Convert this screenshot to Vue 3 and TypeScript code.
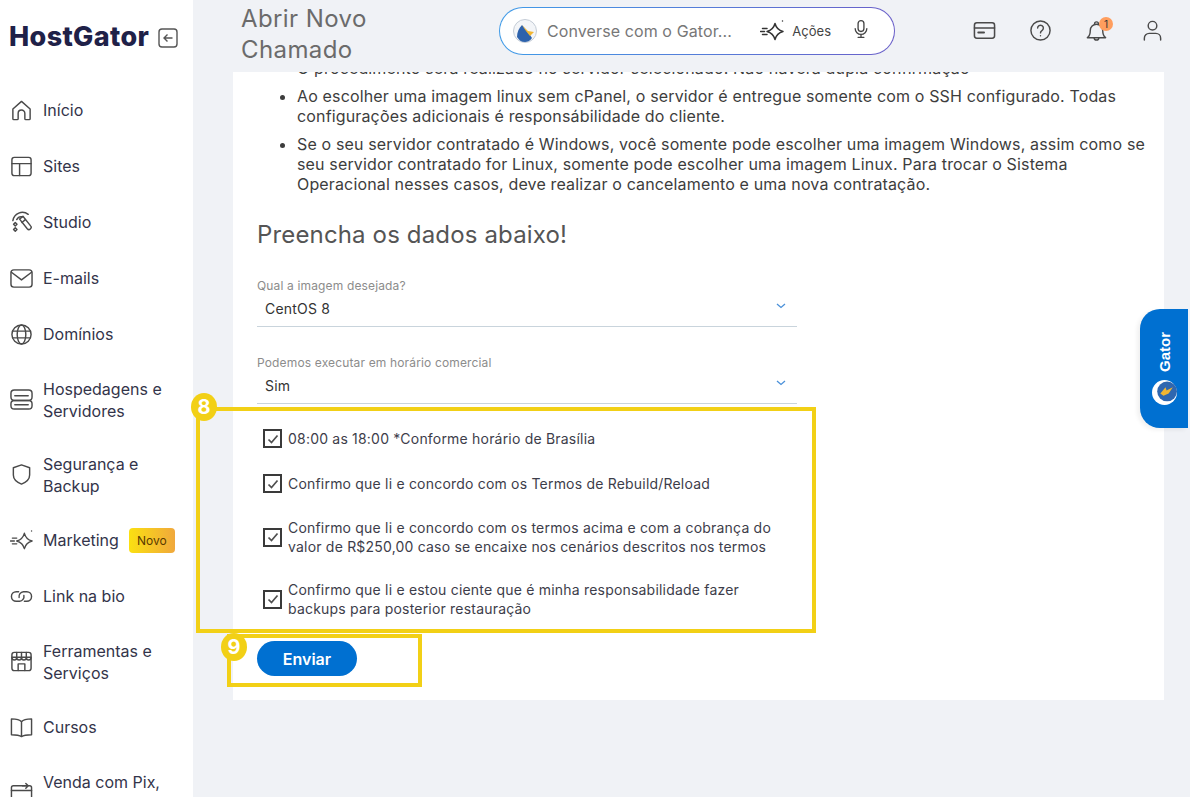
<script setup lang="ts">
interface NavItem { label: string; icon: string; badge?: boolean }
const nav: NavItem[] = [
  { label: 'Início', icon: 'home' },
  { label: 'Sites', icon: 'sites' },
  { label: 'Studio', icon: 'studio' },
  { label: 'E-mails', icon: 'mail' },
  { label: 'Domínios', icon: 'globe' },
  { label: 'Hospedagens e Servidores', icon: 'server' },
  { label: 'Segurança e Backup', icon: 'shield' },
  { label: 'Marketing', icon: 'spark', badge: true },
  { label: 'Link na bio', icon: 'link' },
  { label: 'Ferramentas e Serviços', icon: 'store' },
  { label: 'Cursos', icon: 'book' },
  { label: 'Venda com Pix, Boleto e Cartão', icon: 'sale' },
]
const checks: string[] = [
  '08:00 as 18:00 *Conforme horário de Brasília',
  'Confirmo que li e concordo com os Termos de Rebuild/Reload',
  'Confirmo que li e concordo com os termos acima e com a cobrança do valor de R$250,00 caso se encaixe nos cenários descritos nos termos',
  'Confirmo que li e estou ciente que é minha responsabilidade fazer backups para posterior restauração',
]
</script>

<template>
  <div class="page">
    <aside class="side">
      <div class="brand">
        <span class="logo">HostGator</span>
        <svg class="collapse" viewBox="0 0 20 20" fill="none" stroke="#555" stroke-width="1.4">
          <rect x="1" y="1" width="18" height="18" rx="3" />
          <path d="M14.5 10H6M9.5 6.5 6 10l3.5 3.5" />
        </svg>
      </div>
      <nav class="nav">
        <div v-for="item in nav" :key="item.label" class="nav-row">
          <svg class="nav-ico" viewBox="0 0 24 24" fill="none" stroke="#4a4a4a" stroke-width="1.5" stroke-linecap="round" stroke-linejoin="round">
            <template v-if="item.icon === 'home'">
              <path d="M3 20.500V10.500L12 2.500l9 8v10a1 1 0 0 1-1 1h-3.500a1 1 0 0 1-1-1V15a3.500 3.500 0 0 0-7 0v5.500a1 1 0 0 1-1 1H4a1 1 0 0 1-1-1Z" />
            </template>
            <template v-else-if="item.icon === 'sites'">
              <rect x="2" y="2.500" width="20" height="19" rx="2.500" /><path d="M2 9h20M10 9v12.500" />
            </template>
            <template v-else-if="item.icon === 'studio'">
              <path d="M3 10A10 10 0 0 1 19 3.500" /><path d="M7 9a5.500 5.500 0 0 1 6-3" /><path d="m10 8.500 3.500-3 8 10a2.300 2.300 0 0 1-3.500 3Z" /><path d="m12.500 12 3.500-3" /><path d="m5.500 12 1.800 1.800-1.800 1.800-1.800-1.800ZM5.500 17.500l1.800 1.800-1.800 1.800-1.800-1.800Z" />
            </template>
            <template v-else-if="item.icon === 'mail'">
              <rect x="1" y="3" width="22" height="18" rx="3" /><path d="m1.500 5.500 10.500 8 10.500-8" />
            </template>
            <template v-else-if="item.icon === 'globe'">
              <circle cx="12" cy="12" r="10" /><ellipse cx="12" cy="12" rx="4.500" ry="10" /><path d="M2.800 8.500h18.400M2.800 15.500h18.400" />
            </template>
            <template v-else-if="item.icon === 'server'">
              <rect x="1" y="2" width="22" height="11" rx="3.500" /><rect x="1" y="13" width="22" height="9" rx="3.500" /><path d="M5 8h14M5 17.500h14" />
            </template>
            <template v-else-if="item.icon === 'shield'">
              <path d="M12 2 20.500 5v7.500c0 4.500-3.500 7.500-8.500 9.500-5-2-8.500-5-8.500-9.500V5Z" />
            </template>
            <template v-else-if="item.icon === 'spark'">
              <path d="M15 4.500c1.200 4.500 3.500 6.800 8 8-4.500 1.200-6.800 3.500-8 8-1.200-4.500-3.500-6.800-8-8 4.500-1.200 6.800-3.500 8-8Z" /><path d="M22.500 2v.01M2.500 9.500h4.500M.5 12.500h4M2.500 15.500h4.500" />
            </template>
            <template v-else-if="item.icon === 'link'">
              <path d="M9 7H6.500a5 5 0 0 0 0 10H10a5 5 0 0 0 4.500-6" /><path d="M15 17h2.500a5 5 0 0 0 0-10H14a5 5 0 0 0-4.500 6" />
            </template>
            <template v-else-if="item.icon === 'store'">
              <rect x="2" y="2.500" width="20" height="19" rx="2.500" /><path d="M2 7.500h20M2 7.500c0 4 5 4 5 0 0 4 5 4 5 0 0 4 5 4 5 0 0 4 5 4 5 0M8.500 21.500v-7h7v7M7 2.500v5M12 2.500v5M17 2.500v5" />
            </template>
            <template v-else-if="item.icon === 'book'">
              <path d="M12 6C10 3.500 7 3 1.500 3v16.500c5.500 0 8.500.5 10.500 2 2-1.500 5-2 10.500-2V3C17 3 14 3.500 12 6ZM12 6v15.500" />
            </template>
            <template v-else>
              <rect x="1.500" y="5" width="21" height="16" rx="2" /><path d="M1.500 10h21M13 5h6M16.500 2.500 19 5l-2.500 2.500" />
            </template>
          </svg>
          <span class="nav-label" :class="{ narrow: item.label.length > 12 }">{{ item.label }}</span>
          <span v-if="item.badge" class="novo">Novo</span>
        </div>
      </nav>
    </aside>

    <div class="main">
      <header class="top">
        <h1 class="title">Abrir Novo Chamado</h1>
        <div class="chat">
          <svg class="gator" viewBox="0 0 24 24">
            <circle cx="12" cy="12" r="11.500" fill="#f3f5f8" stroke="#c4ccd6" />
            <path d="M4 18c0-5 2-9 5-12l4 5 4 5 2 3c-2 3-5 4-7 4-4 0-6-2-8-5Z" fill="#2d62ac" />
            <path d="M9 6l6 6 6 1-4 4-4-5Z" fill="#f2b632" />
          </svg>
          <span class="chat-ph">Converse com o Gator...</span>
          <svg class="chat-spark" viewBox="0 0 24 24" fill="none" stroke="#333" stroke-width="1.500" stroke-linecap="round" stroke-linejoin="round">
            <path d="M15 4.500c1.200 4.500 3.500 6.800 8 8-4.500 1.200-6.800 3.500-8 8-1.200-4.500-3.500-6.800-8-8 4.500-1.200 6.800-3.500 8-8Z" /><path d="M22.500 2v.01M2.500 9.500h4.500M.5 12.500h4M2.500 15.500h4.500" />
          </svg>
          <span class="chat-act">Ações</span>
          <svg class="chat-mic" viewBox="0 0 24 24" fill="none" stroke="#444" stroke-width="1.600" stroke-linecap="round">
            <rect x="8.500" y="2" width="7" height="13" rx="3.500" /><path d="M5 11.500a7 7 0 0 0 14 0M12 18.500V22M8.500 22h7" />
          </svg>
        </div>
        <div class="tools">
          <svg class="tool" viewBox="0 0 24 24" fill="none" stroke="#4a4a4a" stroke-width="1.600" stroke-linecap="round">
            <rect x="1.500" y="4" width="21" height="16" rx="2.500" /><path d="M1.500 9.500h21" /><path d="M5.500 14h6" stroke-width="2" />
          </svg>
          <svg class="tool" viewBox="0 0 24 24" fill="none" stroke="#4a4a4a" stroke-width="1.500" stroke-linecap="round">
            <circle cx="12" cy="12" r="10" /><path d="M9 9.500a3 3 0 1 1 4.500 2.600c-1 .6-1.500 1.100-1.500 2.400M12 17.500v.01" />
          </svg>
          <div class="bell">
            <svg class="tool" viewBox="0 0 24 24" fill="none" stroke="#4a4a4a" stroke-width="1.500" stroke-linecap="round" stroke-linejoin="round">
              <path d="M2.500 19.500c2-1.500 3-3.500 3-7.500a6.500 6.500 0 0 1 13 0c0 4 1 6 3 7.500ZM9.500 19.500a2.500 2.500 0 0 0 5 0M10 5a2 2 0 1 1 4 0" />
            </svg>
            <span class="bell-n">1</span>
          </div>
          <svg class="tool" viewBox="0 0 24 24" fill="none" stroke="#4a4a4a" stroke-width="1.500" stroke-linecap="round">
            <circle cx="12" cy="7" r="4.500" /><path d="M3.500 22v-2a5 5 0 0 1 5-5h7a5 5 0 0 1 5 5v2" />
          </svg>
        </div>
      </header>

      <section class="panel">
        <ul class="notes">
          <li>O procedimento será realizado no servidor selecionado. Não haverá dupla confirmação</li>
          <li>Ao escolher uma imagem linux sem cPanel, o servidor é entregue somente com o SSH configurado. Todas configurações adicionais é responsábilidade do cliente.</li>
          <li>Se o seu servidor contratado é Windows, você somente pode escolher uma imagem Windows, assim como se seu servidor contratado for Linux, somente pode escolher uma imagem Linux. Para trocar o Sistema Operacional nesses casos, deve realizar o cancelamento e uma nova contratação.</li>
        </ul>
        <h2 class="heading">Preencha os dados abaixo!</h2>
        <div class="field">
          <div class="f-label">Qual a imagem desejada?</div>
          <div class="f-value"><span>CentOS 8</span><svg class="chev" viewBox="0 0 10 6" fill="none" stroke="#4a90d9" stroke-width="1.300"><path d="m1 1 4 3.500L9 1" /></svg></div>
        </div>
        <div class="field second">
          <div class="f-label">Podemos executar em horário comercial</div>
          <div class="f-value"><span>Sim</span><svg class="chev" viewBox="0 0 10 6" fill="none" stroke="#4a90d9" stroke-width="1.300"><path d="m1 1 4 3.500L9 1" /></svg></div>
        </div>
        <div class="checks">
          <div v-for="c in checks" :key="c" class="check">
            <span class="box"><svg viewBox="0 0 14 14" fill="none" stroke="#4f4f4f" stroke-width="1.700"><path d="m2.500 7.500 3 3 6-7" /></svg></span>
            <span class="check-t">{{ c }}</span>
          </div>
        </div>
        <button class="send" type="button">Enviar</button>
      </section>
    </div>

    <div class="tab">
      <span class="tab-t">Gator</span>
      <svg class="tab-g" viewBox="0 0 24 24">
        <circle cx="12" cy="12" r="12" fill="#fff" />
        <circle cx="14.500" cy="11" r="9.500" fill="#2f67b0" />
        <path d="M8 13l5-6 1 3 6-3-4 6-5 2Z" fill="#f2b632" />
      </svg>
    </div>

    <div class="mark mark-8"><span class="num n8">8</span></div>
    <div class="mark mark-9"><span class="num n9">9</span></div>
  </div>
</template>

<style>
html, body { margin: 0; background: #f0f2f6; }
</style>

<style scoped>
.page {
  position: relative;
  display: flex;
  width: 1190px;
  height: 797px;
  overflow: hidden;
  background: #f0f2f6;
  font-family: Inter, "Noto Sans", sans-serif;
  color: #3b3b4a;
}
.side { flex: 0 0 193px; background: #fff; }
.brand { height: 82px; box-sizing: border-box; padding: 20px 0 0 9px; display: flex; align-items: flex-start; gap: 9px; }
.logo { font-family: Inter, sans-serif; font-weight: 800; font-size: 27px; line-height: 34px; letter-spacing: 0.35px; color: #1f2148; }
.collapse { width: 20px; height: 20px; margin-top: 8px; flex: none; }
.nav-row { display: flex; align-items: center; min-height: 56px; box-sizing: border-box; padding: 15.500px 0 15.500px 10px; }
.nav-ico { flex: 0 0 23px; width: 23px; height: 23px; margin-right: 10px; }
.nav-label { font-size: 16px; line-height: 22px; color: #33344a; }
.nav-label.narrow { max-width: 135px; }
.novo { margin-left: 10px; flex: none; width: 46px; height: 25px; line-height: 25px; text-align: center; border-radius: 4px; font-size: 12px; color: #5a3a00; background: linear-gradient(90deg, #fbe011, #f0a83c); }

.main { flex: none; width: 931px; margin-left: 40px; }
.top { height: 72px; display: flex; align-items: flex-start; }
.title { flex: none; width: 180px; margin: 3px 0 0 8px; font-size: 24px; line-height: 31px; font-weight: 400; letter-spacing: 0.4px; color: #6b6b6b; }
.chat { flex: none; margin: 7px 0 0 78px; width: 396px; height: 48px; box-sizing: border-box; border: 1px solid transparent; border-radius: 24px; background: linear-gradient(#fff, #fff) padding-box, linear-gradient(90deg, #3f9be8, #6a5fc9) border-box; display: flex; align-items: center; padding: 0 23px 0 13px; }
.gator { flex: none; width: 24px; height: 24px; margin-right: 10px; }
.chat-ph { font-size: 16px; letter-spacing: 0.1px; color: #777; flex: 1; white-space: nowrap; }
.chat-spark { flex: none; width: 24px; height: 24px; margin-right: 8px; }
.chat-act { font-size: 13px; color: #444; margin-right: 20px; }
.chat-mic { flex: none; width: 20px; height: 22px; margin-bottom: 4px; }
.tools { flex: none; margin-left: 78px; margin-top: 19px; display: flex; gap: 33px; align-items: center; }
.tool { width: 23px; height: 23px; display: block; }
.bell { position: relative; }
.bell-n { position: absolute; top: -2px; right: -5px; width: 14px; height: 14px; border-radius: 50%; background: #ff9e5e; font-size: 10px; line-height: 14px; text-align: center; color: #333; }

.panel { height: 628px; box-sizing: border-box; background: #fff; overflow: hidden; padding-left: 24px; }
.notes { margin: -14px 0 0; padding: 0 14px 0 40px; font-size: 16px; line-height: 20px; letter-spacing: 0.15px; color: #3d3d3d; }
.notes li { margin-bottom: 8px; }
.heading { margin: 25px 0 0; font-size: 24px; line-height: 31px; font-weight: 400; letter-spacing: 0.15px; color: #555; }
.field { width: 540px; margin-top: 28px; border-bottom: 1px solid #c9d4dc; height: 49px; box-sizing: border-box; }
.field.second { margin-top: 28px; }
.f-label { font-size: 12px; line-height: 16px; letter-spacing: 0.15px; color: #8c8c8c; }
.f-value { display: flex; justify-content: space-between; padding: 0 11px 0 8px; margin-top: 4px; font-size: 14px; line-height: 22px; letter-spacing: 0.2px; color: #333; }
.chev { width: 10px; height: 6px; margin-top: 5px; }
.checks { width: 520px; margin-left: 6px; margin-top: 12px; display: flex; flex-direction: column; }
.check { display: flex; align-items: center; gap: 6px; }
.check:nth-child(1), .check:nth-child(2) { height: 45px; }
.check:nth-child(3), .check:nth-child(4) { height: 62px; }
.box { flex: 0 0 19px; width: 19px; height: 19px; box-sizing: border-box; border: 2.500px solid #3a3a3a; display: flex; align-items: center; justify-content: center; }
.box svg { width: 14px; height: 14px; }
.check-t { font-size: 14px; line-height: 19px; letter-spacing: 0.2px; color: #3d3d4a; }
.send { display: block; margin-top: 11px; width: 100px; height: 35px; border: 0; border-radius: 18px; background: #0070d1; color: #fff; font: 600 16px Inter, sans-serif; }

.tab { position: absolute; left: 1140px; top: 309px; width: 48px; height: 119px; background: #0070d1; border-radius: 20px 0 0 20px; box-shadow: -3px 2px 4px rgba(0,0,0,.06); display: flex; flex-direction: column; align-items: center; justify-content: flex-end; padding-bottom: 23px; box-sizing: border-box; }
.tab-t { writing-mode: vertical-rl; transform: rotate(180deg); color: #fff; font: 700 15px "Liberation Sans", sans-serif; margin-bottom: 8px; }
.tab-g { width: 25px; height: 25px; }

.mark { position: absolute; box-sizing: border-box; border: 4px solid #f2d016; }
.mark-8 { left: 196px; top: 407px; width: 620px; height: 226px; }
.mark-9 { left: 227px; top: 634px; width: 195px; height: 53px; }
.num { position: absolute; width: 26px; height: 28px; border-radius: 50%; background: #f2d016; color: #fff; font: 700 20px/28px Inter, sans-serif; text-align: center; }
.n8 { left: -9px; top: -18px; }
.n9 { left: -10px; top: -5px; }
</style>
